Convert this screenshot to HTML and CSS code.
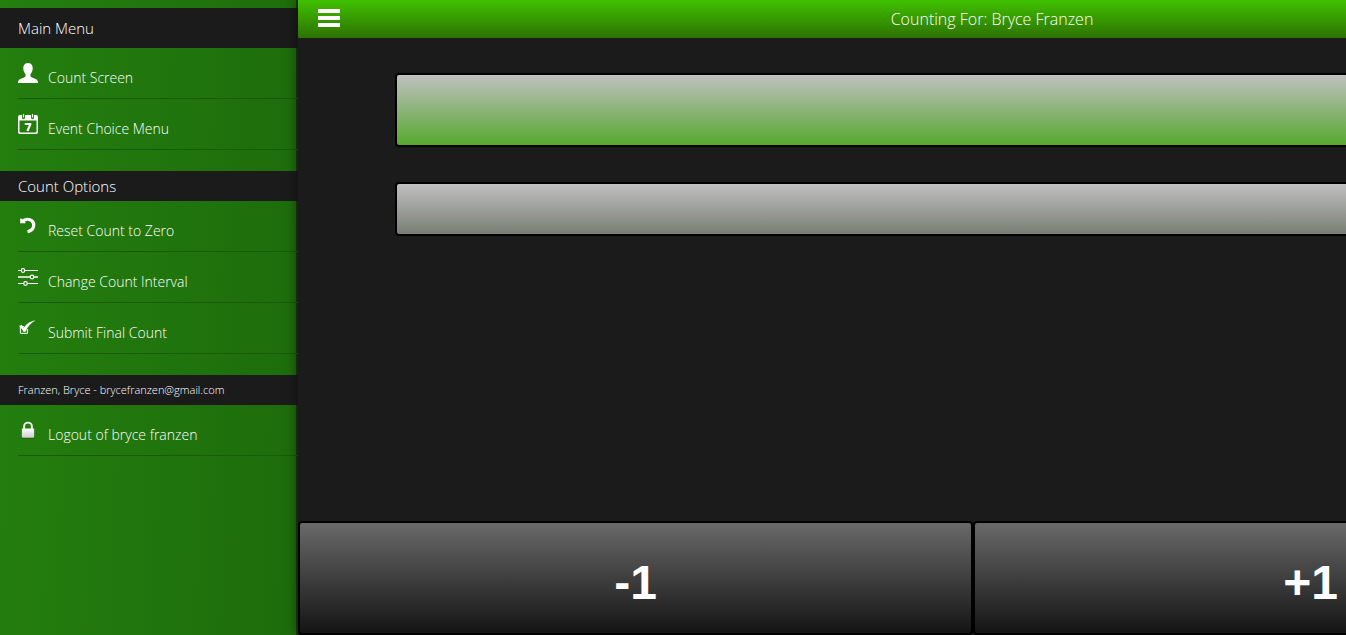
FILE: index.html
```html
<!DOCTYPE html>
<html lang="en">
<head>
<meta charset="utf-8">
<title>Counting For: Bryce Franzen</title>
<link rel="stylesheet" href="styles.css">
</head>
<body>
<div class="app">
  <nav class="sidebar">
    <h2 class="heading heading-main">Main Menu</h2>
    <ul class="menu">
      <li><a class="item" href="#count"><svg class="icon" viewBox="0 0 20 20"><path fill="#fff" d="M10 0c3 0 4.700 2.200 4.700 5.200 0 2.600-1 4.500-2.200 5.800v2c0 1.200 1.500 1.600 3.500 2.300 2.400.8 4 1.800 4 4.300V20H0v-.4c0-2.500 1.600-3.500 4-4.300 2-.7 3.500-1.100 3.500-2.300v-2C6.300 9.700 5.300 7.800 5.300 5.200 5.300 2.200 7 0 10 0z"/></svg>Count Screen</a></li>
      <li><a class="item" href="#events"><svg class="icon" viewBox="0 0 20 20"><path fill="#fff" fill-rule="evenodd" d="M2 1h2v2.500c0 2.300 3 2.300 3 0V1h6v2.500c0 2.300 3 2.300 3 0V1h2a2 2 0 0 1 2 2v15a2 2 0 0 1-2 2H2a2 2 0 0 1-2-2V3a2 2 0 0 1 2-2zM1.500 6.500v11q0 1 1 1h15q1 0 1-1v-11z"/><path d="M5.500 0v3.500M14.500 0v3.500" stroke="#fff" stroke-width="1.200"/><path d="M6.800 10h5.400v.6L9.400 17" fill="none" stroke="#fff" stroke-width="2.200"/></svg>Event Choice Menu</a></li>
    </ul>
    <h2 class="heading">Count Options</h2>
    <ul class="menu">
      <li><a class="item" href="#reset"><svg class="icon" viewBox="0 0 20 20"><path d="M4.500 5.200C7 3 11 2.400 13.800 4.800c3.600 3.300 2.200 9.600-4.300 10.900" fill="none" stroke="#fff" stroke-width="3.200"/><path fill="#fff" d="M2.200 2.200l1.600.8 3.600 3.300v.9H2.200z"/></svg>Reset Count to Zero</a></li>
      <li><a class="item" href="#interval"><svg class="icon" viewBox="0 0 20 20"><g fill="none" stroke="#fff" stroke-width="1.200"><path d="M0 3.500h3.200M6.800 3.500H20M0 16.500h5.700M9.300 16.500H20"/><path stroke-width="2" stroke-opacity=".75" d="M0 10h12.200M15.800 10H20"/><circle cx="5" cy="3.500" r="1.800"/><circle cx="14" cy="10" r="1.800"/><circle cx="7.500" cy="16.500" r="1.800"/></g></svg>Change Count Interval</a></li>
      <li><a class="item" href="#submit"><svg class="icon" viewBox="0 0 20 20"><path d="M9.500 11v3.500q0 .9-.9.900H3.300q-.9 0-.9-.9V9.300q0-.8.8-.8H6" fill="none" stroke="#dbe8d7" stroke-width="1.200"/><path fill="#fff" d="M1 8.200l2.500-1.400 2.300 3C8.300 6 12 3.200 17.500 2.500c-4.700 2.600-7.700 6-10 11.200H5.400C4.500 11.500 3 9.500 1 8.200z"/></svg>Submit Final Count</a></li>
    </ul>
    <h2 class="heading heading-user">Franzen, Bryce - brycefranzen@gmail.com</h2>
    <ul class="menu">
      <li><a class="item" href="#logout"><svg class="icon" viewBox="0 0 20 20"><defs><linearGradient id="lock" x2="0" y2="1"><stop stop-color="#fff"/><stop offset="1" stop-color="#ccc"/></linearGradient></defs><rect x="3.500" y="9" width="13" height="9.800" rx="1" fill="#155207" opacity=".6"/><path d="M6.100 9.500V6.500a3.900 3.900 0 0 1 7.800 0v3" fill="none" stroke="#f4f4f4" stroke-width="1.900"/><rect x="3.800" y="8.500" width="12.400" height="9.300" rx="1" fill="url(#lock)"/></svg>Logout of bryce franzen</a></li>
    </ul>
  </nav>
  <main class="page">
    <header class="bar">
      <button class="toggle" type="button" aria-label="Toggle menu"><svg class="bars" viewBox="0 0 22 18"><path fill="#fff" d="M0 0h22v4H0zM0 7h22v4H0zM0 14h22v4H0z"/></svg></button>
      <h1 class="title">Counting For: Bryce Franzen</h1>
    </header>
    <section class="panels">
      <div class="panel panel-count"></div>
      <div class="panel panel-info"></div>
    </section>
    <footer class="actions">
      <button class="step" type="button">-1</button>
      <button class="step" type="button">+1</button>
    </footer>
  </main>
</div>
</body>
</html>
```
FILE: styles.css
```css
* {
  box-sizing: border-box;
}

body {
  margin: 0;
  background: #1b1b1b;
  color: #fff;
  font-family: "Open Sans", sans-serif;
  font-weight: 300;
}

.app {
  display: flex;
  height: 100vh;
  overflow: hidden;
}

.sidebar {
  flex: 0 0 298px;
  padding-top: 8px;
  background: linear-gradient(92deg, #247f0e, #1d6c0c);
  box-shadow: inset -2px 0 0 #163c0d;
}

.heading {
  margin: 0;
  padding: 0 18px;
  background: #1b1b1b;
  font-size: 15px;
  font-weight: 300;
  line-height: 30px;
}

.heading-main {
  line-height: 40px;
}

.heading-user {
  font-size: 11px;
}

.menu {
  margin: 0 0 21px;
  padding: 0 0 0 18px;
  list-style: none;
}

.item {
  display: flex;
  gap: 10px;
  height: 51px;
  border-bottom: 1px solid #1b590c;
  color: #fff;
  font-size: 14px;
  line-height: 60px;
  text-decoration: none;
}

.icon {
  width: 20px;
  height: 20px;
  margin-top: 15px;
}

.page {
  display: flex;
  flex: 0 0 calc(100% + 4px);
  flex-direction: column;
  background: #1b1b1b;
  box-shadow: 0 0 12px rgba(0, 0, 0, 0.5);
}

.bar {
  display: flex;
  align-items: center;
  height: 38px;
  background: linear-gradient(#40c000, #2d7200);
}

.toggle {
  display: flex;
  justify-content: flex-end;
  width: 42px;
  padding: 0 0 2px;
  border: 0;
  background: none;
}

.bars {
  width: 22px;
  height: 18px;
}

.title {
  flex: 1;
  margin: 0;
  padding-right: 4px;
  font-size: 16px;
  font-weight: 300;
  line-height: 38px;
  text-align: center;
}

.panels {
  display: flex;
  flex: 1;
  flex-direction: column;
  gap: 35px;
  padding: 35px 97px;
}

.panel {
  border: 2px solid #000;
  border-radius: 4px;
}

.panel-count {
  height: 74px;
  background: linear-gradient(#c0c0c0, #57a82f);
}

.panel-info {
  height: 54px;
  background: linear-gradient(#c0c0c0, #787e74);
}

.actions {
  display: grid;
  grid-template-columns: 1fr 1fr;
}

.step {
  height: 114px;
  padding: 8px 0 0;
  border: 2px solid #000;
  border-radius: 4px;
  background: linear-gradient(#696969, #141414);
  color: #fff;
  font: bold 48px "Liberation Sans", Arial, sans-serif;
}
```
